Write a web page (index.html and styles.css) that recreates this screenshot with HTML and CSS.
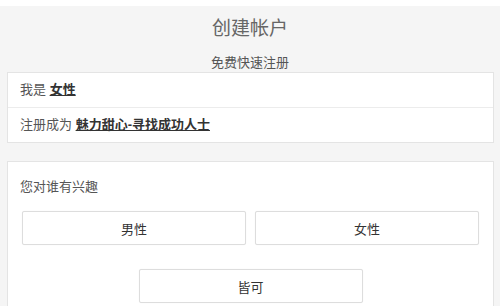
FILE: index.html
```html
<!DOCTYPE html>
<html lang="zh-CN">
<head>
    <meta charset="UTF-8">
    <meta name="viewport" content="width=device-width, initial-scale=1.0">
    <title>创建帐户</title>
    <link rel="stylesheet" href="styles.css">
</head>
<body>
    <div class="header">
        <h1 class="title">创建帐户</h1>
        <p class="subtitle">免费快速注册</p>
    </div>

    <div class="card">
        <div class="row">我是 <a href="#" class="pick">女性</a></div>
        <div class="row">注册成为 <a href="#" class="pick">魅力甜心-寻找成功人士</a></div>
    </div>

    <div class="card card-pad">
        <p class="question">您对谁有兴趣</p>
        <div class="choices">
            <button type="button" class="choice">男性</button>
            <button type="button" class="choice">女性</button>
        </div>
        <div class="choices-single">
            <button type="button" class="choice">皆可</button>
        </div>
    </div>
</body>
</html>
```

FILE: styles.css
```css
html {
    background-color: #fff;
}
body {
    margin: 6px 0 0;
    min-height: 300px;
    background-color: #f5f5f5;
    font-family: "Liberation Sans", "Noto Sans CJK SC", sans-serif;
    font-size: 13px;
    color: #555;
}
.header {
    padding-top: 11px;
    text-align: center;
}
.title {
    margin: 0;
    font-size: 19px;
    line-height: 24px;
    font-weight: normal;
    color: #666;
}
.subtitle {
    margin: 13px 0 0;
    line-height: 18px;
    color: #555;
}
.card {
    margin: 0 6px 0 7px;
    background-color: #fff;
    border: 1px solid #e4e4e4;
}
.row {
    height: 34px;
    line-height: 34px;
    padding-left: 12px;
}
.row + .row {
    border-top: 1px solid #ececec;
}
.pick {
    color: #333;
    font-weight: bold;
    text-decoration: underline;
}
.card-pad {
    margin-top: 18px;
    padding: 16px 14px 20px;
}
.question {
    margin: 0 0 15px -2px;
    line-height: 18px;
}
.choices {
    display: grid;
    grid-template-columns: 1fr 1fr;
    gap: 9px;
}
.choices-single {
    display: flex;
    justify-content: center;
    margin-top: 24px;
}
.choice {
    height: 34px;
    padding: 0;
    background-color: #fff;
    border: 1px solid #ddd;
    border-radius: 2px;
    box-shadow: 0 0 1px rgba(0, 0, 0, 0.08);
    font-family: inherit;
    font-size: 13px;
    color: #333;
    cursor: pointer;
}
.choices-single .choice {
    width: 224px;
}
```
